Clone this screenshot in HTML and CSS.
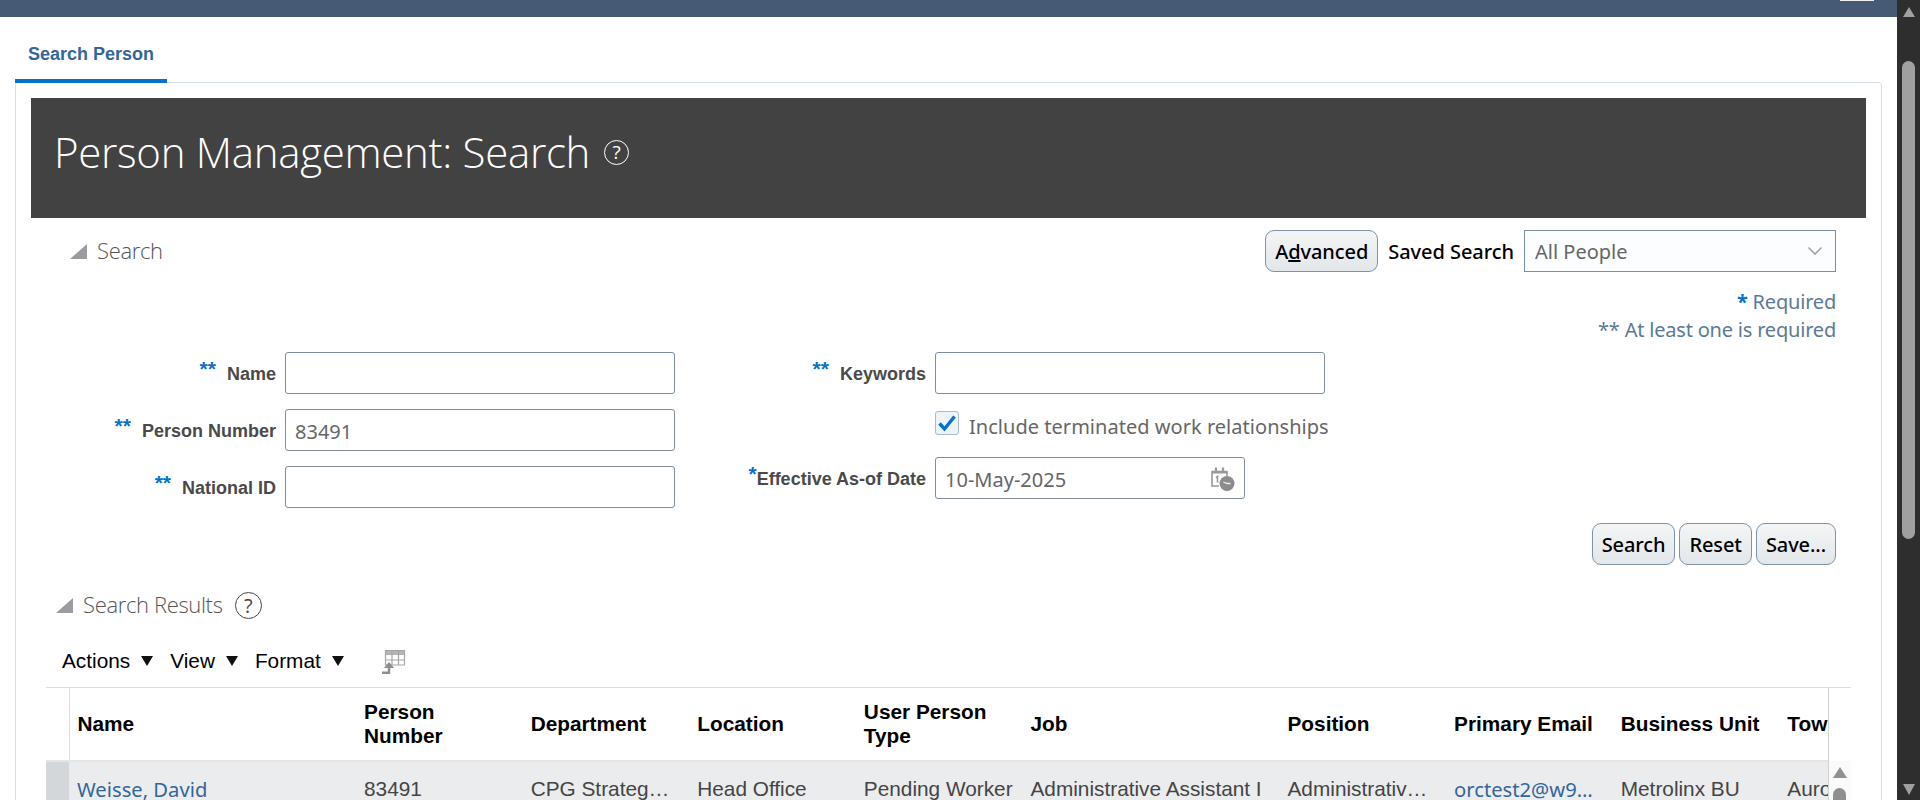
FILE: index.html
```html
<!DOCTYPE html>
<html lang="en">
<head>
  <meta charset="UTF-8" />
  <title>Person Management: Search</title>
  <link rel="stylesheet" href="styles.css">
</head>
<body>
  <div id="page">
    <div class="topbar"><span class="topbar-box"></span></div>

    <div class="tabs"><a class="tab">Search Person</a></div>

    <div class="panel">
      <div class="page-title">
        <h1>Person Management: Search</h1>
        <span class="help help-light">?</span>
      </div>

      <div class="search-head">
        <div class="section-title">
          <svg class="disclosure" width="17" height="15" viewBox="0 0 17 15"><polygon points="17,0 17,15 0,15" /></svg>
          <span class="section-text">Search</span>
        </div>
        <div class="saved">
          <button class="btn" type="button">A<u>d</u>vanced</button>
          <span class="saved-label">Saved Search</span>
          <div class="select">
            <span>All People</span>
            <svg width="16" height="10" viewBox="0 0 16 10"><polyline points="1.5,1.5 8,8 14.5,1.5" /></svg>
          </div>
        </div>
      </div>

      <div class="notes">
        <div><span class="star">*</span> Required</div>
        <div>** At least one is required</div>
      </div>

      <div class="form">
        <div class="form-col col-left">
          <div class="field">
            <label><span class="star">**</span><span class="label-gap">Name</span></label>
            <input type="text" />
          </div>
          <div class="field">
            <label><span class="star">**</span><span class="label-gap">Person Number</span></label>
            <input type="text" value="83491" />
          </div>
          <div class="field">
            <label><span class="star">**</span><span class="label-gap">National ID</span></label>
            <input type="text" />
          </div>
        </div>

        <div class="form-col col-right">
          <div class="field">
            <label><span class="star">**</span><span class="label-gap">Keywords</span></label>
            <input type="text" />
          </div>
          <div class="field field-check">
            <label></label>
            <span class="checkbox">
              <svg width="20" height="18" viewBox="0 0 20 18"><polyline points="2.5,9.5 7.5,15 17.5,2.5" /></svg>
            </span>
            <span class="check-text">Include terminated work relationships</span>
          </div>
          <div class="field field-date">
            <label><span class="star">*</span>Effective As-of Date</label>
            <div class="date-input">
              <span>10-May-2025</span>
              <svg width="24" height="24" viewBox="0 0 24 24">
                <path class="cal-line" d="M1 4.5h15M1 4v15h7M16 4v5" />
                <path class="cal-tabs" d="M5 0.5v4M12 0.5v4M1 5.5h15" />
                <path class="cal-line" d="M5 10.5l1.5-1v6" />
                <circle class="cal-clock" cx="16" cy="16.5" r="7.5" />
                <path class="cal-hand" d="M12.5 15l3.5 1.5h3.5" />
              </svg>
            </div>
          </div>
        </div>
      </div>

      <div class="form-buttons">
        <button class="btn" type="button">Search</button>
        <button class="btn" type="button">Reset</button>
        <button class="btn" type="button">Save...</button>
      </div>

      <div class="results">
        <div class="section-title results-title">
          <svg class="disclosure" width="17" height="15" viewBox="0 0 17 15"><polygon points="17,0 17,15 0,15" /></svg>
          <span class="section-text">Search Results</span>
          <span class="help help-dark">?</span>
        </div>

        <div class="toolbar">
          <span class="menu">Actions<i class="caret"></i></span>
          <span class="menu">View<i class="caret"></i></span>
          <span class="menu">Format<i class="caret"></i></span>
          <svg class="freeze" width="24" height="24" viewBox="0 0 24 24">
            <path class="freeze-head" d="M3.5 0.5h19v4.5h-19z" />
            <path class="freeze-grid" d="M3.5 0.5h19v14.5h-19zM3.5 10h19M10 0.5v14.5M16.5 0.5v14.5" />
            <path class="freeze-arrow" d="M0 22.8h7v-6" />
            <polygon class="freeze-tip" points="7,12 1.8,18 12.2,18" />
          </svg>
        </div>

        <div class="grid-wrap">
          <div class="grid-clip">
            <table class="grid">
              <colgroup>
                <col class="c-sel"><col class="c-name"><col class="c-std"><col class="c-std"><col class="c-std"><col class="c-std"><col class="c-job"><col class="c-std"><col class="c-std"><col class="c-std"><col class="c-std">
              </colgroup>
              <thead>
                <tr>
                  <th class="sel"></th>
                  <th>Name</th>
                  <th>Person Number</th>
                  <th>Department</th>
                  <th>Location</th>
                  <th>User Person Type</th>
                  <th>Job</th>
                  <th>Position</th>
                  <th>Primary Email</th>
                  <th>Business Unit</th>
                  <th>Town</th>
                </tr>
              </thead>
              <tbody>
                <tr>
                  <td class="sel"></td>
                  <td><a class="link">Weisse, David</a></td>
                  <td>83491</td>
                  <td>CPG Strateg…</td>
                  <td>Head Office</td>
                  <td>Pending Worker</td>
                  <td>Administrative Assistant I</td>
                  <td>Administrativ…</td>
                  <td><a class="link">orctest2@w9…</a></td>
                  <td>Metrolinx BU</td>
                  <td>Aurora</td>
                </tr>
              </tbody>
            </table>
          </div>
          <div class="grid-scroll">
            <div class="grid-scroll-track">
              <i class="arrow-up"></i>
              <i class="grid-thumb"></i>
            </div>
          </div>
        </div>
      </div>
    </div>
  </div>

  <div class="scrollbar">
    <i class="sb-up"></i>
    <i class="sb-thumb"></i>
    <i class="sb-down"></i>
  </div>
</body>
</html>
```

FILE: styles.css
```css
* {
  box-sizing: border-box;
}

html, body {
  height: 100%;
  margin: 0;
  overflow: hidden;
  background: #fff;
  font-family: "Liberation Sans", Arial, sans-serif;
}

body {
  display: flex;
}

#page {
  flex: 1;
  min-width: 0;
}

.topbar {
  height: 17px;
  background: #475a75;
  position: relative;
}

.topbar-box {
  position: absolute;
  top: 0;
  left: 1840px;
  width: 34px;
  height: 1px;
  background: #f0f0f0;
}

.tabs {
  height: 66px;
  padding: 0 0 0 15px;
  display: flex;
  align-items: flex-end;
  margin-bottom: -1px;
  position: relative;
}

.tab {
  width: 152px;
  height: 50px;
  padding: 10px 0 0 13px;
  border-bottom: 4px solid #0572ce;
  color: #33669a;
  font-size: 18px;
  font-weight: bold;
  line-height: 22px;
}

.panel {
  width: 1867px;
  margin-left: 15px;
  padding: 15px 15px 0;
  border: 1px solid #d6dfe6;
  border-radius: 3px;
}

.page-title {
  height: 120px;
  background: #424242;
  padding-left: 23px;
  display: flex;
  align-items: center;
  color: #fff;
}

h1 {
  margin: -12px 0 0;
  font-family: "Open Sans", sans-serif;
  font-size: 42px;
  font-weight: 300;
  letter-spacing: -0.3px;
  line-height: 56px;
}

.help {
  display: inline-flex;
  align-items: center;
  justify-content: center;
  border-radius: 50%;
  font-family: "Open Sans", sans-serif;
  font-weight: 300;
}

.help-light {
  width: 25px;
  height: 25px;
  margin: -12px 0 0 14px;
  border: 1.5px solid #fff;
  font-size: 19px;
  font-weight: 400;
}

.help-dark {
  width: 27px;
  height: 27px;
  margin-left: 12px;
  border: 1.5px solid #444;
  color: #444;
  font-size: 20px;
  font-weight: 400;
}

.search-head {
  margin-top: 12px;
  height: 42px;
  padding: 0 30px 0 39px;
  display: flex;
  justify-content: space-between;
  align-items: center;
}

.section-title {
  display: flex;
  align-items: center;
  font-family: "Open Sans", sans-serif;
  font-size: 22px;
  font-weight: 300;
  letter-spacing: -0.35px;
  color: #555;
}

.section-text {
  margin-top: -2px;
}

.disclosure {
  margin-right: 10px;
}

.disclosure polygon {
  fill: #999da1;
}

.saved {
  display: flex;
  align-items: center;
}

.btn {
  height: 42px;
  padding: 0 9px;
  border: 1px solid #7d93a8;
  border-radius: 9px;
  background: linear-gradient(#f3f5f6, #e3e7ea);
  color: #000;
  font-family: "Noto Sans", sans-serif;
  font-size: 20px;
  font-weight: 500;
  letter-spacing: -0.1px;
}

.saved-label {
  margin: 0 10px;
  font-family: "Noto Sans", sans-serif;
  font-size: 20px;
  font-weight: 500;
  letter-spacing: -0.05px;
  color: #000;
}

.select {
  width: 312px;
  height: 42px;
  padding: 0 12px 0 10px;
  border: 1px solid #7d8f9f;
  background: #fcfdfe;
  display: flex;
  align-items: center;
  justify-content: space-between;
  font-family: "Noto Sans", sans-serif;
  font-size: 20px;
  color: #666;
}

.select polyline {
  fill: none;
  stroke: #a5a5a5;
  stroke-width: 1.6;
}

.notes {
  padding: 16px 30px 0 0;
  height: 80px;
  text-align: right;
  font-family: "Noto Sans", sans-serif;
  font-size: 20px;
  line-height: 28px;
  color: #5b7a94;
  letter-spacing: -0.2px;
}

.star {
  color: #0572ce;
  font-weight: bold;
}

.form {
  display: flex;
}

.form-col {
  display: flex;
  flex-direction: column;
}

.col-left {
  gap: 15px;
}

.col-left label {
  width: 245px;
}

.col-right {
  margin-left: 50px;
}

.col-right label {
  width: 201px;
}

.field {
  height: 42px;
  display: flex;
  align-items: center;
}

label {
  margin-right: 9px;
  text-align: right;
  font-size: 18px;
  font-weight: bold;
  color: #4a4a4a;
  white-space: nowrap;
}

label .star {
  font-size: 21px;
  position: relative;
  top: -4px;
}

.label-gap {
  margin-left: 11px;
}

input {
  width: 390px;
  height: 42px;
  padding: 3px 9px 0;
  border: 1px solid #7d8f9f;
  border-radius: 3px;
  font-family: "Noto Sans", sans-serif;
  font-size: 20px;
  color: #666;
}

.field-check {
  height: 24px;
  margin: 17px 0 22px;
}

.checkbox {
  width: 24px;
  height: 24px;
  border: 1px solid #a9bccc;
  border-radius: 3px;
  background: #eef3f8;
  display: flex;
  align-items: center;
  justify-content: center;
}

.checkbox polyline {
  fill: none;
  stroke: #0572ce;
  stroke-width: 3.4;
}

.check-text {
  margin-left: 10px;
  padding-top: 7px;
  font-family: "Noto Sans", sans-serif;
  font-size: 20px;
  color: #666;
  letter-spacing: 0.03px;
  white-space: nowrap;
}

.date-input {
  width: 310px;
  height: 42px;
  padding: 2px 9px 0;
  border: 1px solid #7d8f9f;
  border-radius: 3px;
  display: flex;
  align-items: center;
  justify-content: space-between;
  font-family: "Noto Sans", sans-serif;
  font-size: 20px;
  color: #666;
}

.cal-line {
  fill: none;
  stroke: #999;
  stroke-width: 1.6;
}

.cal-tabs {
  fill: none;
  stroke: #999;
  stroke-width: 2.2;
}

.cal-clock {
  fill: #8c8c8c;
}

.cal-hand {
  fill: none;
  stroke: #eee;
  stroke-width: 1.3;
}

.form-buttons {
  margin-top: 15px;
  padding-right: 30px;
  display: flex;
  justify-content: flex-end;
  gap: 4px;
}

.results {
  padding: 0 15px;
}

.results-title {
  margin-top: 26px;
  height: 28px;
  padding-left: 10px;
}

.toolbar {
  margin-top: 28px;
  height: 40px;
  padding: 0 0 12px 16px;
  display: flex;
  align-items: center;
}

.menu {
  display: flex;
  align-items: center;
  margin-right: 17px;
  font-size: 20.8px;
  color: #000;
}

.caret {
  width: 0;
  height: 0;
  margin-left: 11px;
  border-left: 6.5px solid transparent;
  border-right: 6.5px solid transparent;
  border-top: 10px solid #111;
}

.freeze {
  margin: 2px 0 0 21px;
}

.freeze-head {
  fill: #b5b5b5;
}

.freeze-grid {
  fill: none;
  stroke: #a5a5a5;
  stroke-width: 1.2;
}

.freeze-arrow {
  fill: none;
  stroke: #8e8e8e;
  stroke-width: 2.4;
}

.freeze-tip {
  fill: #8e8e8e;
}

.grid-wrap {
  display: flex;
  border-top: 1px solid #d6dfe6;
}

.grid-clip {
  width: 1782px;
  overflow: hidden;
}

.grid {
  width: 1900px;
  table-layout: fixed;
  border-collapse: collapse;
}

.c-sel { width: 23px; }
.c-name { width: 287px; }
.c-std { width: 166.6px; }
.c-job { width: 257px; }

th {
  height: 73px;
  padding: 0 8px;
  border-bottom: 2px solid #e3e5e7;
  background: #fff;
  font-size: 20.8px;
  font-weight: bold;
  line-height: 24px;
  text-align: left;
  color: #000;
}

th.sel {
  border-right: 1px solid #d6dfe6;
  padding: 0;
}

td {
  height: 54px;
  padding: 0 8px;
  background: #ebecee;
  font-size: 20.8px;
  color: #444;
  white-space: nowrap;
  overflow: hidden;
}

td.sel {
  background: #d4d7d9;
  padding: 0;
}

.link {
  font-family: "Noto Sans", sans-serif;
  font-size: 20.2px;
  color: #33669a;
}

.grid-scroll {
  flex: 1;
  padding-top: 73px;
  border-left: 1px solid #cfd2d5;
}

.grid-scroll-track {
  height: 60px;
  padding: 6px 0 0 4px;
  background: #fafafa;
}

.arrow-up {
  display: block;
  width: 0;
  height: 0;
  border-left: 7px solid transparent;
  border-right: 7px solid transparent;
  border-bottom: 11px solid #909090;
}

.grid-thumb {
  display: block;
  width: 13px;
  height: 40px;
  margin-top: 10px;
  border-radius: 7px;
  background: #8f8f8f;
}

.scrollbar {
  width: 23px;
  height: 100%;
  background: #2e2e2e;
  position: relative;
  flex-shrink: 0;
  display: flex;
  flex-direction: column;
  align-items: center;
  padding-top: 7px;
}

.sb-up {
  width: 0;
  height: 0;
  border-left: 6.5px solid transparent;
  border-right: 6.5px solid transparent;
  border-bottom: 10px solid #a0a0a0;
}

.sb-thumb {
  width: 13px;
  height: 478px;
  margin-top: 44px;
  border-radius: 7px;
  background: #a0a0a0;
}

.sb-down {
  width: 0;
  height: 0;
  margin-top: 245px;
  border-left: 6.5px solid transparent;
  border-right: 6.5px solid transparent;
  border-top: 11px solid #a0a0a0;
}
```
